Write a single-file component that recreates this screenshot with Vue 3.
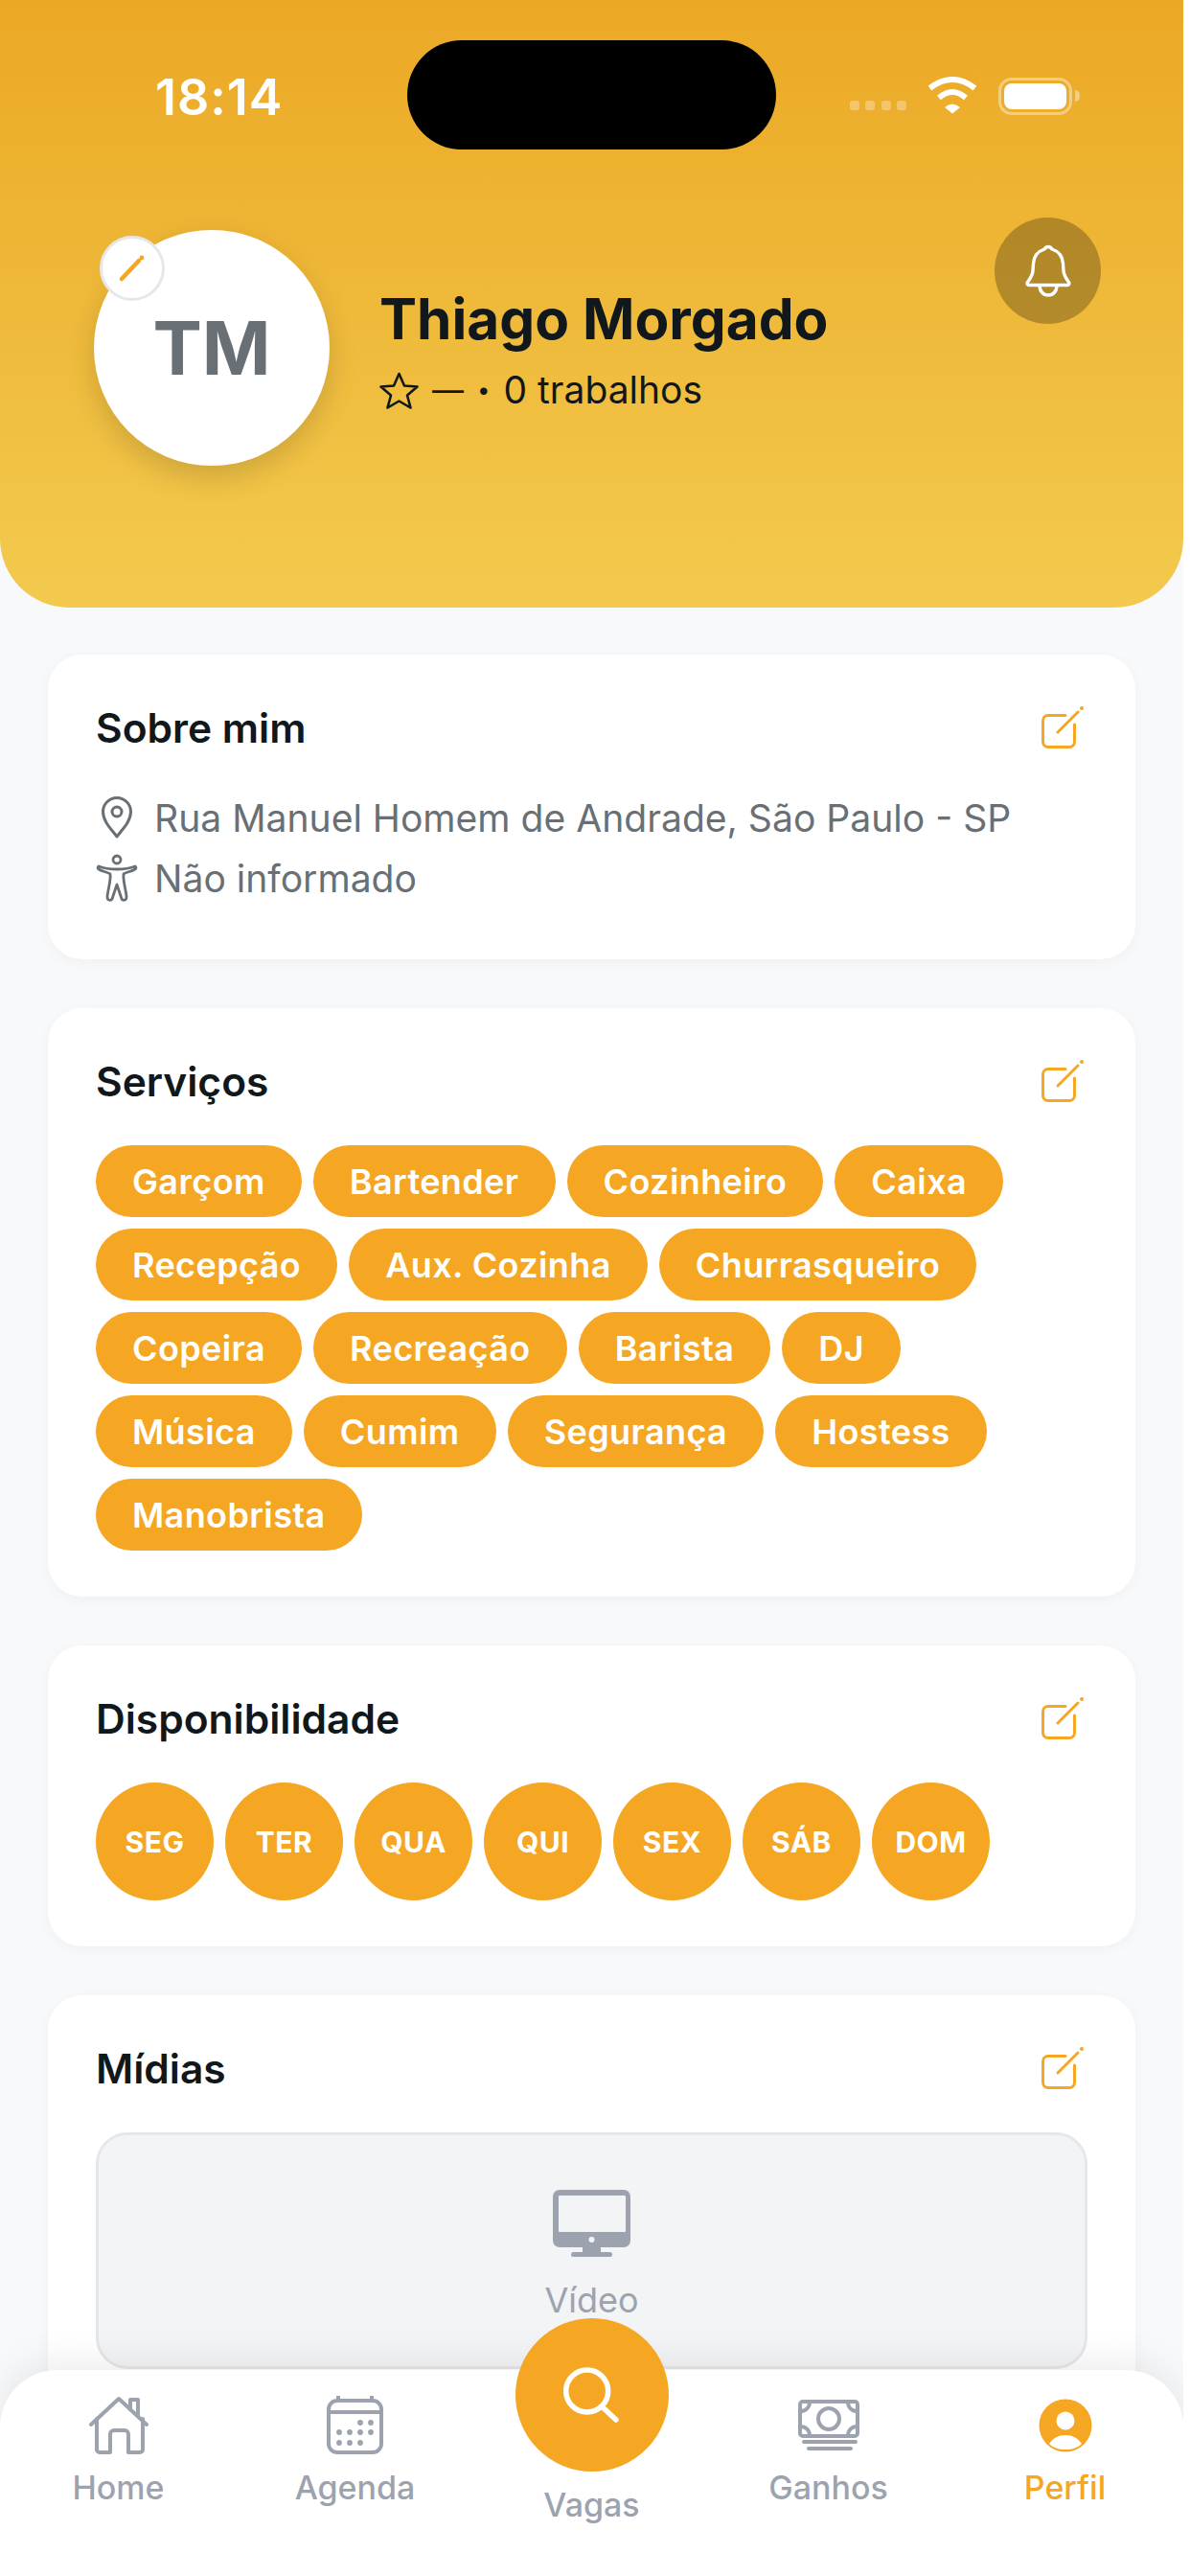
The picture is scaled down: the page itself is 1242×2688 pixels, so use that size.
<template>
    <div class="screen">
        <header class="hero">
            <div class="status-bar">
                <span class="time">18:14</span>
                <div class="island"></div>
                <div class="status-icons">
                    <div class="signal">
                        <i v-for="n in 4" :key="n"></i>
                    </div>
                    <svg class="wifi" width="52" height="40" viewBox="0 0 52 40" fill="none">
                        <path d="M2.5 12Q26 -6 49.5 12" stroke="#fff" stroke-width="6" />
                        <path d="M12 22Q26 10 40 22" stroke="#fff" stroke-width="6" />
                        <path d="M18 32Q26 25 34 32L26 38.5Z" fill="#fff" />
                    </svg>
                    <div class="battery"><div class="battery-level"></div></div>
                    <div class="battery-tip"></div>
                </div>
            </div>

            <div class="profile">
                <div class="avatar">
                    <span>TM</span>
                    <button class="avatar-edit">
                        <svg width="40" height="40" viewBox="0 0 40 40" fill="none">
                            <path d="M9 31L27 12" stroke="#f5a623" stroke-width="4.5" stroke-linecap="round" />
                            <circle cx="30" cy="9" r="2.4" fill="#f5a623" />
                        </svg>
                    </button>
                </div>
                <div class="profile-info">
                    <h1>Thiago Morgado</h1>
                    <div class="rating">
                        <svg width="41" height="39" viewBox="0 0 41 39" fill="none">
                            <path d="M20.5 2L26 14.5L39.5 15.5L29 24.5L32.5 37.5L20.5 30.5L8.5 37.5L12 24.5L1.5 15.5L15 14.5Z"
                                stroke="#11181c" stroke-width="2.6" stroke-linejoin="round" />
                        </svg>
                        <span class="rating-dash">—</span>
                        <span class="rating-dot">•</span>
                        <span>0 trabalhos</span>
                    </div>
                </div>
                <button class="bell">
                    <svg width="48" height="56" viewBox="0 0 48 56" fill="none" stroke="#fff" stroke-width="3.4"
                        stroke-linejoin="round" stroke-linecap="round">
                        <path d="M24 2.5c-2 0-3 1-4 2.5C14 7 9 12 8.5 20L8 28C7.5 32 5 36 2.5 39.5C1.5 41 2.5 42.5 4 42.5H44C45.5 42.5 46.5 41 45.5 39.5C43 36 40.5 32 40 28L39.5 20C39 12 34 7 28 5c-1-1.5-2-2.5-4-2.5Z" />
                        <path d="M15 43c0 6 4 10 9 10s9-4 9-10" />
                    </svg>
                </button>
            </div>
        </header>

        <main class="content">
            <section class="card">
                <div class="card-head">
                    <h2>Sobre mim</h2>
                    <svg class="edit-icon" width="48" height="48" viewBox="0 0 48 48" fill="none" stroke="#f5a623"
                        stroke-width="3" stroke-linecap="round">
                        <path d="M27 10.5H9a5.5 5.5 0 0 0-5.5 5.5V38a5.5 5.5 0 0 0 5.5 5.5H31a5.5 5.5 0 0 0 5.5-5.5V20" />
                        <path d="M19 28L40 7" />
                        <circle cx="44" cy="3" r="2" fill="#f5a623" stroke="none" />
                    </svg>
                </div>
                <div class="about">
                    <div class="about-row">
                        <svg width="36" height="46" viewBox="0 0 36 46" fill="none" stroke="#687076" stroke-width="3"
                            stroke-linejoin="round">
                            <path d="M18 43C12 35 3.5 27 3.5 17a14.5 14.5 0 0 1 29 0C32.5 27 24 35 18 43Z" />
                            <circle cx="18" cy="17" r="5" />
                        </svg>
                        <span>Rua Manuel Homem de Andrade, São Paulo - SP</span>
                    </div>
                    <div class="about-row">
                        <svg width="44" height="50" viewBox="0 0 44 50" fill="none" stroke="#687076" stroke-width="2.8"
                            stroke-linejoin="round">
                            <circle cx="22" cy="6" r="4" />
                            <path d="M3 13C8 15 14 16 22 16C30 16 36 15 41 13C42.5 14 42 15.5 41 16C37 18.5 32 19 29 21C28 28 32 40 32 45C32 49 28 49 27 47L22 32L17 47C16 49 12 49 12 45C12 40 16 28 15 21C12 19 7 18.5 3 16C2 15.5 1.5 14 3 13Z" />
                        </svg>
                        <span>Não informado</span>
                    </div>
                </div>
            </section>

            <section class="card">
                <div class="card-head">
                    <h2>Serviços</h2>
                    <svg class="edit-icon" width="48" height="48" viewBox="0 0 48 48" fill="none" stroke="#f5a623"
                        stroke-width="3" stroke-linecap="round">
                        <path d="M27 10.5H9a5.5 5.5 0 0 0-5.5 5.5V38a5.5 5.5 0 0 0 5.5 5.5H31a5.5 5.5 0 0 0 5.5-5.5V20" />
                        <path d="M19 28L40 7" />
                        <circle cx="44" cy="3" r="2" fill="#f5a623" stroke="none" />
                    </svg>
                </div>
                <div class="pills">
                    <span v-for="service in services" :key="service" class="pill">{{ service }}</span>
                </div>
            </section>

            <section class="card">
                <div class="card-head">
                    <h2>Disponibilidade</h2>
                    <svg class="edit-icon" width="48" height="48" viewBox="0 0 48 48" fill="none" stroke="#f5a623"
                        stroke-width="3" stroke-linecap="round">
                        <path d="M27 10.5H9a5.5 5.5 0 0 0-5.5 5.5V38a5.5 5.5 0 0 0 5.5 5.5H31a5.5 5.5 0 0 0 5.5-5.5V20" />
                        <path d="M19 28L40 7" />
                        <circle cx="44" cy="3" r="2" fill="#f5a623" stroke="none" />
                    </svg>
                </div>
                <div class="days">
                    <span v-for="day in days" :key="day" class="day">{{ day }}</span>
                </div>
            </section>

            <section class="card">
                <div class="card-head">
                    <h2>Mídias</h2>
                    <svg class="edit-icon" width="48" height="48" viewBox="0 0 48 48" fill="none" stroke="#f5a623"
                        stroke-width="3" stroke-linecap="round">
                        <path d="M27 10.5H9a5.5 5.5 0 0 0-5.5 5.5V38a5.5 5.5 0 0 0 5.5 5.5H31a5.5 5.5 0 0 0 5.5-5.5V20" />
                        <path d="M19 28L40 7" />
                        <circle cx="44" cy="3" r="2" fill="#f5a623" stroke="none" />
                    </svg>
                </div>
                <div class="media-box">
                    <svg width="81" height="70" viewBox="0 0 81 70">
                        <rect width="81" height="60" rx="7" fill="#9ca3af" />
                        <rect x="6" y="6" width="70" height="38" rx="1" fill="#f3f4f6" />
                        <circle cx="40.5" cy="52" r="3" fill="#f3f4f6" />
                        <rect x="31" y="60" width="19" height="6" fill="#9ca3af" />
                        <rect x="19" y="65" width="43" height="5" rx="2.5" fill="#9ca3af" />
                    </svg>
                    <span>Vídeo</span>
                </div>
            </section>
        </main>

        <nav class="tabbar">
            <div class="tab">
                <svg width="62" height="62" viewBox="0 0 62 62" fill="none" stroke="#9ca3af" stroke-width="4"
                    stroke-linecap="round" stroke-linejoin="round">
                    <path d="M2 30L31 3L60 30" />
                    <path d="M43 14V4H51V21" />
                    <path d="M8 24V56a3 3 0 0 0 3 3H22V40a4 4 0 0 1 4-4H37a4 4 0 0 1 4 4V59H53a3 3 0 0 0 3-3V24" />
                </svg>
                <span>Home</span>
            </div>
            <div class="tab">
                <svg width="60" height="62" viewBox="0 0 60 62" fill="none" stroke="#9ca3af" stroke-width="4"
                    stroke-linecap="round">
                    <rect x="2" y="5" width="55" height="54" rx="9" />
                    <path d="M2 17H57" />
                    <path d="M12 1V5M47 1V5" />
                    <g fill="#9ca3af" stroke="none">
                        <circle v-for="dot in calendarDots" :key="dot.join()" :cx="dot[0]" :cy="dot[1]" r="2.9" />
                    </g>
                </svg>
                <span>Agenda</span>
            </div>
            <div class="tab tab-center">
                <button class="fab">
                    <svg width="59" height="58" viewBox="0 0 59 58" fill="none" stroke="#fff" stroke-width="5.5"
                        stroke-linecap="round">
                        <circle cx="24.7" cy="25" r="22" />
                        <path d="M41 42L55 55" />
                    </svg>
                </button>
                <span>Vagas</span>
            </div>
            <div class="tab">
                <svg width="64" height="62" viewBox="0 0 64 62" fill="none" stroke="#9ca3af" stroke-width="4"
                    stroke-linecap="round" stroke-linejoin="round">
                    <rect x="2" y="6" width="60" height="36" rx="3" />
                    <circle cx="32" cy="24" r="11" />
                    <path d="M2 16C8 16 12 12 12 6M52 6C52 12 56 16 62 16M2 32C8 32 12 36 12 42M52 42C52 36 56 32 62 32" />
                    <path d="M6 48H60M11 55H55" />
                </svg>
                <span>Ganhos</span>
            </div>
            <div class="tab active">
                <svg width="56" height="62" viewBox="0 0 56 62">
                    <g transform="translate(0 3)">
                        <circle cx="28" cy="28" r="27.5" fill="#f5a623" />
                        <circle cx="28" cy="23" r="9.5" fill="#fff" />
                        <path d="M11 47C15 41 21 38 28 38C35 38 41 41 45 47C41 51 35 53 28 53C21 53 15 51 11 47Z" fill="#fff" />
                    </g>
                </svg>
                <span>Perfil</span>
            </div>
        </nav>
    </div>
</template>

<script setup>
const services = [
    'Garçom', 'Bartender', 'Cozinheiro', 'Caixa',
    'Recepção', 'Aux. Cozinha', 'Churrasqueiro',
    'Copeira', 'Recreação', 'Barista', 'DJ',
    'Música', 'Cumim', 'Segurança', 'Hostess',
    'Manobrista',
];

const days = ['SEG', 'TER', 'QUA', 'QUI', 'SEX', 'SÁB', 'DOM'];

const calendarDots = [
    [35, 28], [46, 28],
    [13, 38], [24, 38], [35, 38], [46, 38],
    [13, 49], [24, 49], [35, 49],
];
</script>

<style>
html,
body {
    margin: 0;
    background: #fff;
}
</style>

<style scoped>
/* a captura tem uma faixa branca de 7px à direita */
.screen {
    position: relative;
    width: 1235px;
    height: 2688px;
    overflow: hidden;
    background: #f8f9fb;
    font-family: Inter, "Liberation Sans", sans-serif;
    color: #11181c;
}

button {
    padding: 0;
    border: none;
    display: flex;
    align-items: center;
    justify-content: center;
}

/* topo amarelo */
.hero {
    height: 634px;
    box-sizing: border-box;
    padding-top: 80px;
    background: linear-gradient(180deg, #eba825 0%, #f3ca4e 100%);
    border-radius: 0 0 72px 72px;
}

.status-bar {
    position: relative;
    height: 40px;
    padding: 0 108px 0 162px;
    display: flex;
    align-items: center;
    justify-content: space-between;
}

.time {
    margin-top: 3px;
    font-size: 52px;
    font-weight: 600;
    line-height: 40px;
    letter-spacing: 1px;
    color: #fff;
}

.island {
    position: absolute;
    left: 425px;
    top: -38px;
    width: 385px;
    height: 114px;
    border-radius: 57px;
    background: #000;
}

.status-icons {
    display: flex;
    align-items: center;
}

.signal {
    display: flex;
    gap: 6.5px;
    margin: 19px 22px 0 0;
}

.signal i {
    width: 10px;
    height: 10px;
    border-radius: 3px;
    background: rgba(255, 255, 255, 0.3);
}

.battery {
    width: 77px;
    height: 39px;
    box-sizing: border-box;
    margin-left: 22px;
    padding: 3px;
    border: 3px solid rgba(255, 255, 255, 0.4);
    border-radius: 14px;
}

.battery-level {
    width: 100%;
    height: 100%;
    border-radius: 8px;
    background: #fff;
}

.battery-tip {
    width: 5px;
    height: 12px;
    margin-left: 3px;
    border-radius: 0 6px 6px 0;
    background: rgba(255, 255, 255, 0.4);
}

.profile {
    display: flex;
    align-items: flex-start;
    margin-top: 120px;
    padding: 0 86px 0 98px;
}

.avatar {
    position: relative;
    flex: none;
    width: 246px;
    height: 246px;
    border-radius: 50%;
    background: #fff;
    box-shadow: 0 12px 30px rgba(0, 0, 0, 0.15);
    display: flex;
    align-items: center;
    justify-content: center;
    font-size: 77px;
    font-weight: 700;
    color: #687076;
}

.avatar-edit {
    position: absolute;
    left: 6px;
    top: 6px;
    width: 68px;
    height: 68px;
    box-sizing: border-box;
    border: 3px solid #e5e7eb;
    border-radius: 50%;
    background: #fff;
}

.profile-info {
    margin: 61px 0 0 52px;
}

.profile-info h1 {
    margin: 0;
    font-size: 58.5px;
    line-height: 64px;
    font-weight: 700;
    color: #11181c;
}

.rating {
    display: flex;
    align-items: center;
    gap: 14px;
    margin-top: 20px;
    font-size: 39px;
    line-height: 44px;
}

.rating-dash {
    font-size: 33px;
}

.rating-dot {
    font-size: 24px;
}

.bell {
    flex: none;
    width: 111px;
    height: 111px;
    margin: -13px 0 0 auto;
    border-radius: 50%;
    background: rgba(0, 0, 0, 0.25);
}

/* cartões */
.content {
    display: flex;
    flex-direction: column;
    gap: 51px;
    padding: 49px 50px 0;
}

.card {
    padding: 51px 50px 48px;
    border-radius: 36px;
    background: #fff;
    box-shadow: 0 3px 14px rgba(0, 0, 0, 0.04);
}

.card-head {
    height: 52px;
    display: flex;
    align-items: center;
    justify-content: space-between;
    margin-bottom: 40px;
}

.card-head h2 {
    margin: 0;
    font-size: 42.5px;
    line-height: 52px;
    font-weight: 600;
    color: #11181c;
}

.edit-icon {
    margin-right: 2px;
}

.about {
    display: flex;
    flex-direction: column;
    gap: 9px;
    padding-bottom: 10px;
}

.about-row {
    height: 54px;
    display: flex;
    align-items: center;
    font-size: 39.1px;
    color: #687076;
}

.about-row svg {
    width: 44px;
    margin-right: 17px;
}

.pills {
    display: flex;
    flex-wrap: wrap;
    gap: 12px;
}

.pill {
    height: 75px;
    padding: 0 38px;
    border-radius: 38px;
    background: #f5a623;
    color: #fff;
    font-size: 36px;
    font-weight: 600;
    line-height: 77px;
    letter-spacing: 0.4px;
}

.days {
    display: flex;
    gap: 12px;
}

.day {
    width: 123px;
    height: 123px;
    border-radius: 50%;
    background: #f5a623;
    color: #fff;
    font-size: 30px;
    font-weight: 700;
    letter-spacing: 0.5px;
    display: flex;
    align-items: center;
    justify-content: center;
}

.media-box {
    height: 247px;
    box-sizing: border-box;
    padding-top: 57px;
    border: 3px solid #e5e7eb;
    border-radius: 33px;
    background: #f3f4f6;
    display: flex;
    flex-direction: column;
    align-items: center;
    gap: 23px;
    font-size: 36px;
    line-height: 44px;
    color: #9ca3af;
}

/* barra inferior */
.tabbar {
    position: absolute;
    left: 0;
    right: 0;
    bottom: 0;
    height: 215px;
    display: grid;
    grid-template-columns: repeat(5, 1fr);
    align-items: start;
    border-radius: 60px 60px 0 0;
    background: #fff;
    box-shadow: 0 -8px 40px rgba(0, 0, 0, 0.08);
}

.tab {
    display: flex;
    flex-direction: column;
    align-items: center;
    gap: 13px;
    padding-top: 27px;
    font-size: 34px;
    line-height: 42px;
    font-weight: 500;
    color: #9ca3af;
}

.tab.active {
    color: #f5a623;
}

.tab-center {
    margin-top: -81px;
    gap: 14px;
}

.fab {
    width: 160px;
    height: 160px;
    border-radius: 50%;
    background: #f5a623;
}
</style>
